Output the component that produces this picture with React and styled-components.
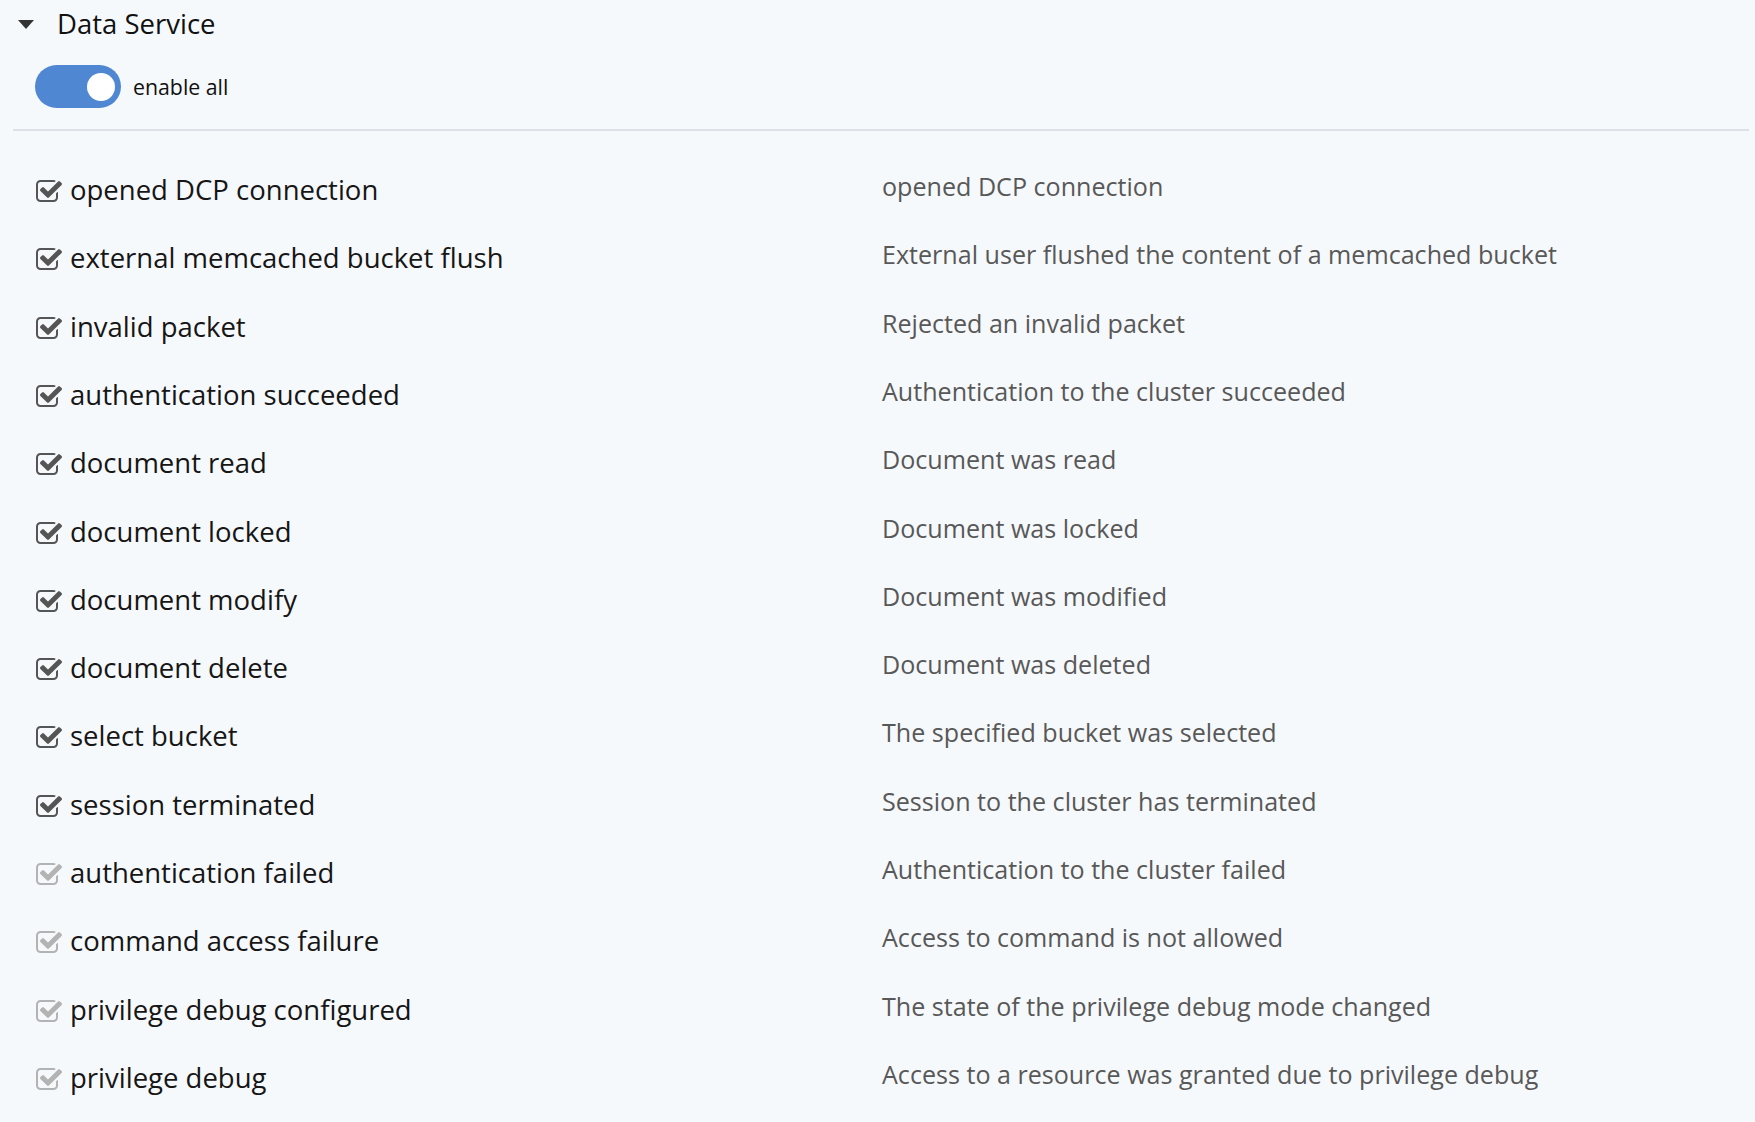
import React from "react";
import styled, { createGlobalStyle } from "styled-components";

const Global = createGlobalStyle`
  html, body { margin: 0; padding: 0; background: #f6f9fc; }
  body { font-family: "Open Sans", "Noto Sans", sans-serif; color: #1c1c1c; }
`;

const Page = styled.div`
  padding: 0 6px 0 13px;
`;

const Header = styled.div`
  border-bottom: 2px solid #dde2e8;
  padding-bottom: 21px;
`;

const TitleRow = styled.div`
  display: flex;
  align-items: center;
  height: 46px;
  padding-left: 5px;
`;

const Caret = styled.span`
  width: 0;
  height: 0;
  border-left: 8.5px solid transparent;
  border-right: 8.5px solid transparent;
  border-top: 9px solid #333;
  margin-right: 23px;
  margin-top: 2px;
`;

const Title = styled.span`
  font-size: 27.5px;
  color: #111;
`;

const ToggleRow = styled.label`
  display: flex;
  align-items: center;
  margin-top: 19px;
  padding-left: 22px;
  gap: 12px;
  cursor: pointer;
`;

const Track = styled.span`
  position: relative;
  width: 86px;
  height: 43px;
  border-radius: 22px;
  background: ${(p) => (p.$on ? "#5087d2" : "#c8ccd2")};
  flex: none;
`;

const Knob = styled.span`
  position: absolute;
  top: 7.5px;
  right: 6.5px;
  width: 28px;
  height: 28px;
  border-radius: 50%;
  background: #fff;
`;

const ToggleText = styled.span`
  font-size: 21.3px;
  color: #111;
`;

const List = styled.div`
  padding-top: 24.5px;
`;

const Row = styled.div`
  display: grid;
  grid-template-columns: 50% 50%;
  height: 68.3px;
  align-items: start;
`;

const Label = styled.label`
  display: flex;
  align-items: center;
  gap: 8px;
  padding: 14.6px 0 0 23px;
  font-size: 27.5px;
  line-height: 39px;
  color: #161616;
`;

const Desc = styled.div`
  padding: 12.6px 0 0 1px;
  font-size: 25.1px;
  line-height: 36px;
  color: #585858;
`;

const Box = styled.svg`
  flex: none;
  width: 26px;
  height: 22px;
  margin-top: 3px;
  fill: ${(p) => (p.$dim ? "#b3b3b3" : "#555")};
`;

const CheckIcon = ({ dim }) => (
  <Box $dim={dim} viewBox="0 128 1664 1408">
    <path d="M1408 930v318q0 119-84.5 203.5t-203.5 84.5h-832q-119 0-203.5-84.5t-84.5-203.5v-832q0-119 84.5-203.5t203.5-84.5h832q63 0 117 25q15 7 18 23q3 17-9 29l-49 49q-10 10-23 10q-3 0-9-2q-23-6-45-6h-832q-66 0-113 47t-47 113v832q0 66 47 113t113 47h832q66 0 113-47t47-113v-254q0-13 9-22l64-64q10-10 23-10q6 0 12 3q20 8 20 29zM1639 441l-814 814q-24 24-57 24t-57-24l-430-430q-24-24-24-57t24-57l110-110q24-24 57-24t57 24l263 263l647-647q24-24 57-24t57 24l110 110q24 24 24 57t-24 57z" />
  </Box>
);

const items = [
  ["opened DCP connection", "opened DCP connection", false],
  ["external memcached bucket flush", "External user flushed the content of a memcached bucket", false],
  ["invalid packet", "Rejected an invalid packet", false],
  ["authentication succeeded", "Authentication to the cluster succeeded", false],
  ["document read", "Document was read", false],
  ["document locked", "Document was locked", false],
  ["document modify", "Document was modified", false],
  ["document delete", "Document was deleted", false],
  ["select bucket", "The specified bucket was selected", false],
  ["session terminated", "Session to the cluster has terminated", false],
  ["authentication failed", "Authentication to the cluster failed", true],
  ["command access failure", "Access to command is not allowed", true],
  ["privilege debug configured", "The state of the privilege debug mode changed", true],
  ["privilege debug", "Access to a resource was granted due to privilege debug", true],
];

export default function App() {
  return (
    <>
      <Global />
      <Page>
        <Header>
          <TitleRow>
            <Caret />
            <Title>Data Service</Title>
          </TitleRow>
          <ToggleRow>
            <Track $on>
              <Knob />
            </Track>
            <ToggleText>enable all</ToggleText>
          </ToggleRow>
        </Header>
        <List>
          {items.map(([label, desc, dim]) => (
            <Row key={label}>
              <Label>
                <CheckIcon dim={dim} />
                {label}
              </Label>
              <Desc>{desc}</Desc>
            </Row>
          ))}
        </List>
      </Page>
    </>
  );
}
